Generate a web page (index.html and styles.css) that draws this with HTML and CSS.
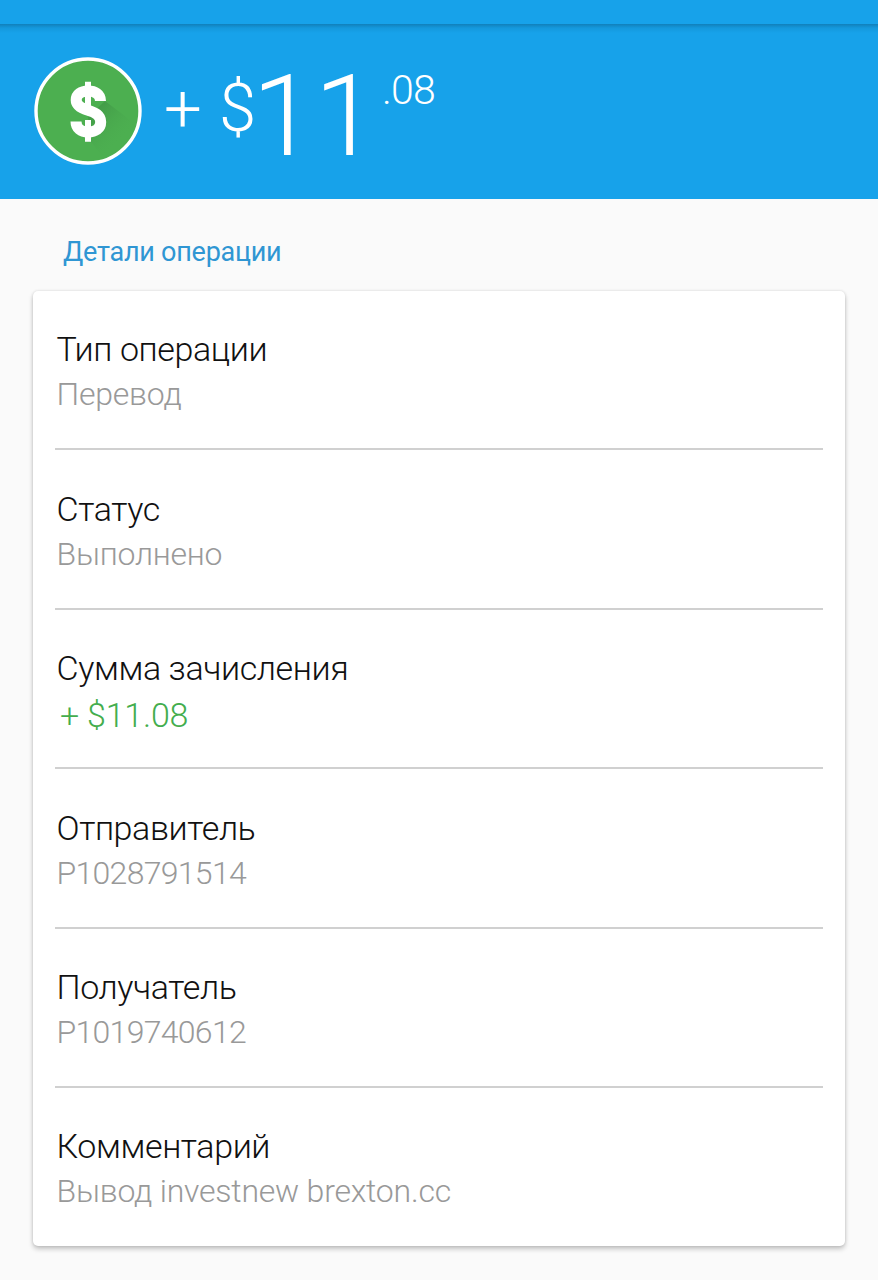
FILE: index.html
```html
<!DOCTYPE html>
<html lang="ru">
<head>
    <meta charset="UTF-8">
    <title>Детали операции</title>
    <link rel="stylesheet" href="styles.css">
</head>
<body>
    <div class="topbar"></div>
    <header class="header">
        <svg class="coin" viewBox="0 0 108 108">
            <defs>
                <clipPath id="coin-clip"><circle cx="54" cy="54" r="51"/></clipPath>
                <linearGradient id="coin-shadow" gradientUnits="userSpaceOnUse" x1="56" y1="56" x2="86" y2="86">
                    <stop offset="0" stop-color="#429a47"/>
                    <stop offset="1" stop-color="#4caf50" stop-opacity="0"/>
                </linearGradient>
            </defs>
            <circle cx="54" cy="54" r="52" fill="#4caf50" stroke="#fff" stroke-width="3.4"/>
            <path clip-path="url(#coin-clip)" d="M71 44 L108 72 V108 H76 L57 85 L54 60 Z" fill="url(#coin-shadow)"/>
            <path d="M66.5 44 C66.5 37 61 34 54 34 C47 34 42.2 37.5 42.2 43 C42.2 49 48 51.5 54 53.3 C61 55.5 66.7 58 66.7 65 C66.7 71.5 61.5 75 54 75 C47 75 42 71.5 42 64.5" fill="none" stroke="#fff" stroke-width="11"/>
            <path d="M54 24.7 V53 M54 63 V84.7" stroke="#fff" stroke-width="6"/>
        </svg>
        <div class="amount">
            <span class="sign">+</span>
            <span class="currency">$</span>
            <span class="whole">11</span>
            <span class="cents">.08</span>
        </div>
    </header>
    <main>
        <h2>Детали операции</h2>
        <div class="card">
            <div class="row">
                <div class="label">Тип операции</div>
                <div class="value">Перевод</div>
            </div>
            <div class="row">
                <div class="label">Статус</div>
                <div class="value">Выполнено</div>
            </div>
            <div class="row">
                <div class="label">Сумма зачисления</div>
                <div class="value income">+ $11.08</div>
            </div>
            <div class="row">
                <div class="label">Отправитель</div>
                <div class="value account">P1028791514</div>
            </div>
            <div class="row">
                <div class="label">Получатель</div>
                <div class="value account">P1019740612</div>
            </div>
            <div class="row">
                <div class="label">Комментарий</div>
                <div class="value">Вывод investnew brexton.cc</div>
            </div>
        </div>
    </main>
</body>
</html>
```
FILE: styles.css
```css
* {
    margin: 0;
    padding: 0;
    box-sizing: border-box;
}

body {
    height: 1280px;
    overflow: hidden;
    background: #fafafa;
    font-family: Roboto, sans-serif;
    font-weight: 300;
}

.topbar {
    height: 24px;
    background: #17a2ea;
}

.header {
    display: flex;
    height: 175px;
    padding: 33px 34px 0;
    background: linear-gradient(#1180ba 0, #1498dc 4px, #17a2ea 9px);
}

.coin {
    width: 108px;
    height: 108px;
}

.amount {
    display: flex;
    align-items: flex-start;
    margin-left: 22px;
    color: #fff;
}

.amount span {
    line-height: 1;
}

.sign {
    width: 56px;
    padding-top: 19px;
    font-size: 67px;
}

.currency {
    width: 32px;
    padding-top: 18px;
    font-size: 67px;
    letter-spacing: -6px;
    text-indent: -1px;
}

.whole {
    width: 130px;
    padding-top: 2px;
    font-size: 114px;
    letter-spacing: -1px;
}

.cents {
    padding-top: 13px;
    font-size: 41px;
    letter-spacing: -0.8px;
}

h2 {
    margin: 36px 0 0 63px;
    height: 56px;
    line-height: 34px;
    font-size: 27px;
    font-weight: 400;
    letter-spacing: -0.25px;
    color: #2f96d3;
}

.card {
    width: 812px;
    height: 955px;
    margin-left: 33px;
    padding: 0 22px;
    background: #fff;
    border-radius: 5px;
    box-shadow: 0 3px 5px rgba(0, 0, 0, 0.22), 0 0 3px rgba(0, 0, 0, 0.12);
}

.row {
    height: 159.4px;
    padding: 37.4px 1.5px 0;
    border-bottom: 2px solid #d0d0d0;
}

.row:last-child {
    border-bottom: none;
}

.label {
    height: 45px;
    line-height: 42px;
    font-size: 34px;
    letter-spacing: -0.4px;
    color: #111;
}

.value {
    line-height: 42px;
    font-size: 32px;
    letter-spacing: -0.22px;
    color: #999;
}

.account {
    letter-spacing: -0.7px;
}

.income {
    padding: 2px 0 0 3.5px;
    font-size: 34px;
    color: #43ad4d;
}
```
